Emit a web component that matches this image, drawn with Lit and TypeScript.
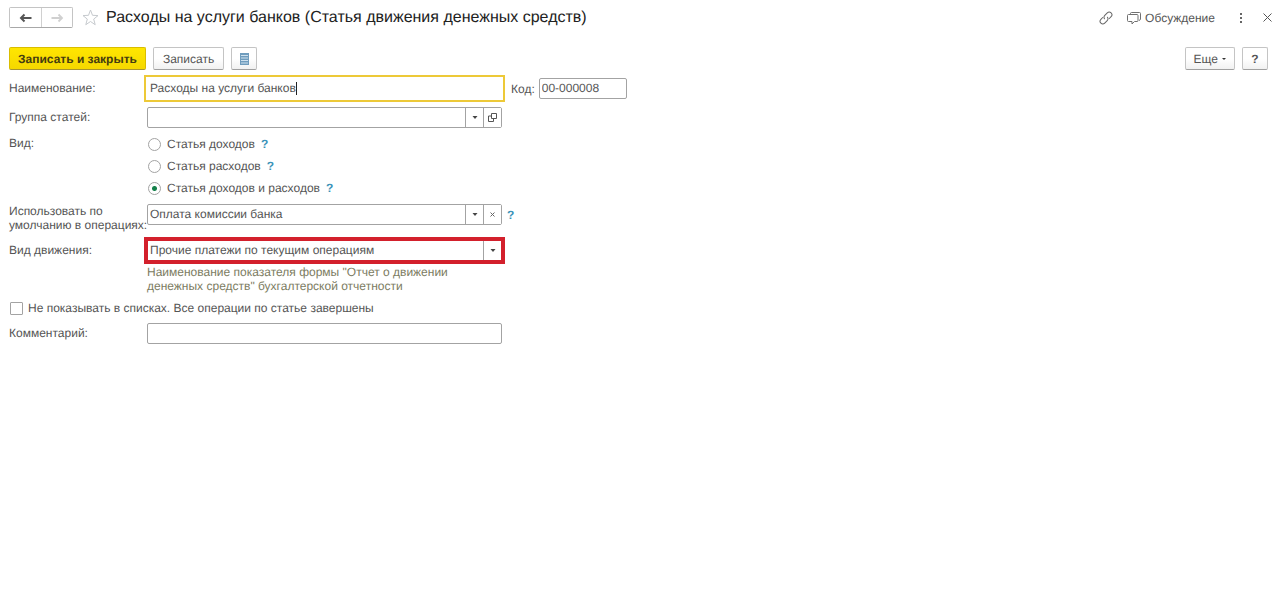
import { LitElement, html, css, svg } from "lit";
import { customElement, state } from "lit/decorators.js";

const caretDown = svg`<svg width="6" height="3" viewBox="0 0 6 3"><path d="M0.5 0h5L3 3z" fill="#444"/></svg>`;

@customElement("app-root")
export class AppRoot extends LitElement {
  @state() private kind = "both";

  static styles = css`
    :host {
      display: block;
      min-height: 100vh;
      background: #fff;
      color: #555;
      font: 12px/14px "Liberation Sans", Arial, sans-serif;
      text-rendering: geometricPrecision;
    }
    * { box-sizing: border-box; }
    button, input, select { font: inherit; color: inherit; margin: 0; text-rendering: inherit; }
    svg { display: block; flex: none; }
    header, .toolbar { display: flex; align-items: center; }
    header { padding: 7px 8px 0 9px; height: 28px; }
    .toolbar { padding: 0 12px 0 9px; margin-top: 19px; gap: 7px; }
    .nav { display: flex; border: 1px solid #c4c4c4; border-bottom-color: #a8a8a8; border-radius: 2px; }
    .nav button {
      width: 31px; height: 19px; padding: 0; border: 0; background: #fff;
      display: grid; place-items: center;
    }
    .nav button + button { border-left: 1px solid #d0d0d0; }
    .plain { border: 0; padding: 0; background: none; display: flex; align-items: center; gap: 4px; }
    .star { margin-left: 9px; }
    h1 { margin: 0 auto 0 7px; font-size: 16px; line-height: 20px; font-weight: 400; color: #222; }
    .actions { display: flex; align-items: center; }
    .chat { margin-left: 14px; }
    .dots { margin-left: 24px; }
    .close { margin-left: 20px; }
    .btn {
      height: 23px; padding: 0 9px; border: 1px solid #c4c4c4; border-bottom-color: #a0a0a0;
      border-radius: 2px; background: linear-gradient(#fff 50%, #f1f1f1);
      display: flex; align-items: center; justify-content: center; gap: 4px;
    }
    .primary {
      background: linear-gradient(#ffe600, #f5d800); border-color: #d9bd00; border-bottom-color: #a89530;
      font-weight: 700; color: #443c10;
    }
    .primary, .more { padding: 0 8px; }
    .square { width: 26px; padding: 0; }
    .more { margin-left: auto; }
    .bold { font-weight: 700; }
    form {
      display: grid;
      grid-template-columns: 138px minmax(0, 355px) auto;
      justify-content: start;
      row-gap: 8px;
      padding: 8px 9px;
    }
    .label { grid-column: 1; padding-top: 3px; white-space: nowrap; }
    .two, .first { padding-top: 0; }
    .box {
      grid-column: 2; display: flex; align-items: stretch; position: relative;
      height: 21px; border: 1px solid #a3a3a3; border-radius: 2px; background: #fff;
    }
    .box input, .box select {
      flex: 1; min-width: 0; border: 0; outline: 0; background: none; padding: 0 2px 1px; height: 19px;
    }
    .box button, .arrow {
      width: 18px; padding: 0; border: 0; border-left: 1px solid #a3a3a3; background: #fff;
      display: grid; place-items: center;
    }
    .box select { appearance: none; }
    .arrow { position: absolute; inset: 0 0 0 auto; pointer-events: none; }
    .active { outline: 2px solid #edc938; outline-offset: 1px; border-color: transparent; border-radius: 0; }
    .box .typed { field-sizing: content; flex: none; padding-right: 0; caret-color: transparent; }
    .caret { width: 1px; margin: 3px 0; background: #222; }
    .marked { outline: 4px solid #d3202c; outline-offset: -1px; border-color: transparent; border-radius: 0; }
    .side { grid-column: 3; display: flex; align-items: center; gap: 4px; padding-left: 9px; height: 21px; }
    .code { width: 88px; }
    .help { border: 0; background: none; padding: 0; color: #3b93b8; font-weight: 700; }
    .side .help { margin-left: -4px; }
    .radios { grid-column: 2; border: 0; margin: -3px 0; padding: 0; min-width: 0; }
    .option { display: flex; align-items: center; height: 22px; gap: 6px; }
    .option label { display: flex; align-items: center; gap: 6px; }
    .option input {
      appearance: none; width: 13px; height: 13px; margin-left: 1px;
      border: 1px solid #a3a3a3; border-radius: 50%; background: #fff;
    }
    .option input:checked { background: radial-gradient(circle, #14804a 2px, #fff 3px); }
    .hint { grid-column: 2; margin: -4px 0 0; color: #7c7c62; }
    .check { grid-column: 1 / -1; display: flex; align-items: center; gap: 5px; }
    .check input {
      appearance: none; width: 13px; height: 13px; margin-left: 1px;
      border: 1px solid #a3a3a3; border-radius: 1px; background: #fff;
    }
  `;

  private option(value: string, text: string) {
    return html`<div class="option">
      <label><input type="radio" name="kind" .checked=${this.kind === value}
        @change=${() => (this.kind = value)} />${text}</label>
      <button type="button" class="help" aria-label="Справка: ${text}">?</button>
    </div>`;
  }

  render() {
    return html`
      <header>
        <div class="nav">
          <button aria-label="Назад"><svg width="13" height="10" viewBox="0 0 13 10"><path d="M12.500 5H3M5.500 1.500L2 5l3.500 3.500" fill="none" stroke="#555" stroke-width="2"/></svg></button>
          <button aria-label="Вперед"><svg width="13" height="10" viewBox="0 0 13 10"><path d="M.5 5h9.500M7.500 1.500L11 5 7.500 8.500" fill="none" stroke="#d0d0d0" stroke-width="1.800"/></svg></button>
        </div>
        <button class="plain star" aria-label="В избранное"><svg width="17" height="17" viewBox="0 0 17 17"><path d="M8.500 1l2 5.300 5.500.3-4.300 3.500 1.500 5.600-4.700-3.200-4.700 3.200 1.500-5.600L1 6.600l5.500-.3z" fill="#fff" stroke="#c6cace"/></svg></button>
        <h1>Расходы на услуги банков (Статья движения денежных средств)</h1>
        <div class="actions">
          <button class="plain" aria-label="Ссылка"><svg width="14" height="14" viewBox="0 0 14 14"><g fill="none" stroke="#666" stroke-linecap="round" transform="rotate(-45 7 7)"><path d="M5 4.300H2.500a2.700 2.700 0 0 0 0 5.400h3.500a2.700 2.700 0 0 0 2.600-2.200"/><path d="M9 9.700h2.500a2.700 2.700 0 0 0 0-5.400H8a2.700 2.700 0 0 0-2.600 2.200"/></g></svg></button>
          <button class="plain chat"><svg width="14" height="14" viewBox="0 0 14 14"><path d="M3.500 3.500V2.500q0-1 1-1h8q1 0 1 1v5.500q0 1-1.500 1.500M1.500 3.500h8.500q1 0 1 1v5q0 1-1 1H7.500L5 13v-2.500H1.500q-1 0-1-1v-5q0-1 1-1z" fill="none" stroke="#707070" stroke-linejoin="round"/></svg>Обсуждение</button>
          <button class="plain dots" aria-label="Меню"><svg width="4" height="12" viewBox="0 0 4 12"><path d="M1 1h2v2H1zM1 5h2v2H1zM1 9h2v2H1z" fill="#666"/></svg></button>
          <button class="plain close" aria-label="Закрыть"><svg width="9" height="9" viewBox="0 0 9 9"><path d="M.5.5l8 8M8.500.5l-8 8" stroke="#555"/></svg></button>
        </div>
      </header>
      <div class="toolbar">
        <button class="btn primary">Записать и закрыть</button>
        <button class="btn">Записать</button>
        <button class="btn square" aria-label="Список"><svg width="9" height="12" viewBox="0 0 9 12"><path d="M0 0h9v12H0z" fill="#6f9cbd"/><path d="M1 2.500h7M1 5h7M1 7.500h7M1 10h7" stroke="#cfe1ee"/></svg></button>
        <button class="btn more">Еще <svg width="4" height="2" viewBox="0 0 4 2"><path d="M0 0h4L2 2z" fill="#333"/></svg></button>
        <button class="btn square bold" aria-label="Справка">?</button>
      </div>
      <form @submit=${(e: Event) => e.preventDefault()}>
        <label class="label" for="name">Наименование:</label>
        <div class="box active"><input id="name" class="typed" value="Расходы на услуги банков" /><span class="caret"></span></div>
        <div class="side"><label for="code">Код:</label><div class="box code"><input id="code" value="00-000008" /></div></div>

        <label class="label" for="group">Группа статей:</label>
        <div class="box"><input id="group" />
          <button type="button" aria-label="Выбрать">${caretDown}</button>
          <button type="button" aria-label="Открыть"><svg width="9" height="9" viewBox="0 0 9 9"><path d="M3.500.5h5v5h-5zM3.500 3H.5v5.500h5V5.500" fill="none" stroke="#555"/></svg></button>
        </div>

        <span class="label first" id="kind">Вид:</span>
        <fieldset class="radios" aria-labelledby="kind">
          ${this.option("income", "Статья доходов")}
          ${this.option("expense", "Статья расходов")}
          ${this.option("both", "Статья доходов и расходов")}
        </fieldset>

        <label class="label two" for="use">Использовать по<br />умолчанию в операциях:</label>
        <div class="box"><input id="use" value="Оплата комиссии банка" />
          <button type="button" aria-label="Выбрать">${caretDown}</button>
          <button type="button" aria-label="Очистить"><svg width="5" height="5" viewBox="0 0 5 5"><path d="M.5.5l4 4M4.500.5l-4 4" stroke="#666"/></svg></button>
        </div>
        <div class="side"><button type="button" class="help" aria-label="Справка">?</button></div>

        <label class="label" for="move">Вид движения:</label>
        <div class="box marked"><select id="move"><option>Прочие платежи по текущим операциям</option></select><span class="arrow">${caretDown}</span></div>

        <p class="hint">Наименование показателя формы "Отчет о движении<br />денежных средств" бухгалтерской отчетности</p>

        <label class="check"><input type="checkbox" />Не показывать в списках. Все операции по статье завершены</label>

        <label class="label" for="comment">Комментарий:</label>
        <div class="box"><input id="comment" /></div>
      </form>
    `;
  }
}
